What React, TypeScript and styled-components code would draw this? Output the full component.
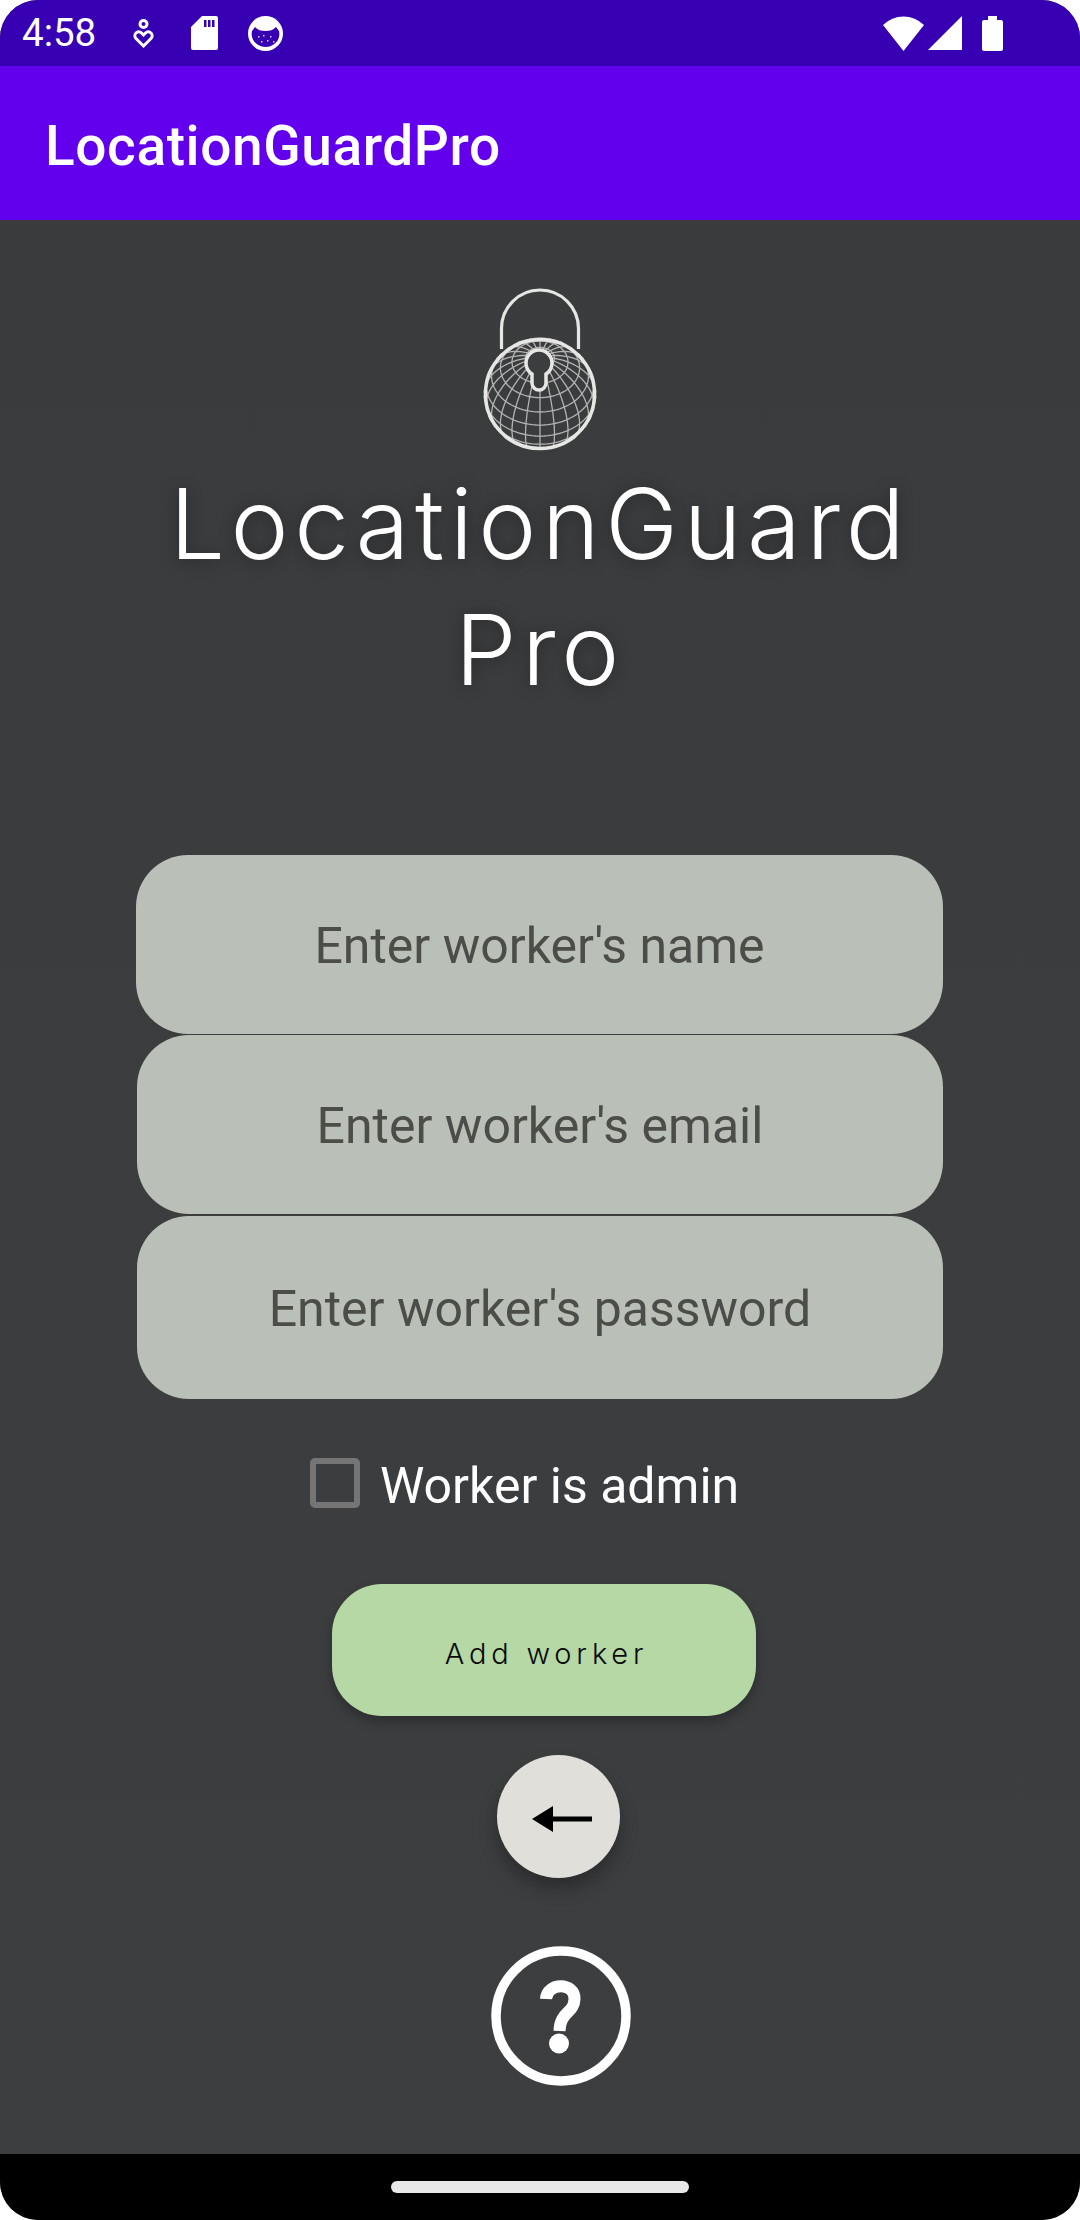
import React from 'react';
import styled, { createGlobalStyle } from 'styled-components';

const Global = createGlobalStyle`
  html, body { margin: 0; padding: 0; background: #fff; }
  #root { width: 1080px; height: 2220px; overflow: hidden; }
`;
const Screen = styled.div`
  width: 1080px; height: 2220px; display: flex; flex-direction: column; border-radius: 38px;
  background: linear-gradient(#3a3b3d, #3d3e40); font-family: Roboto, "Liberation Sans", sans-serif; overflow: hidden;
`;
const StatusBar = styled.div`
  height: 66px; flex: none; background: #3700b3; color: #fff; display: flex; align-items: center;
  padding: 0 77px 0 22px; box-sizing: border-box;
`;
const Time = styled.span` font-size: 38.5px; line-height: 66px; width: 111px; `;
const StatusLeft = styled.div` display: flex; align-items: center; flex: 1; `;
const StatusIcon = styled.svg<{ $gap: number }>` display: block; margin-left: ${p => p.$gap}px; `;
const AppBar = styled.div`
  height: 154px; flex: none; background: #6200ee; color: #fff; display: flex; align-items: center;
  padding: 5px 45px 0; font-size: 55px; font-weight: 500; letter-spacing: .6px; box-sizing: border-box;
`;
const Content = styled.main`
  flex: 1; display: flex; flex-direction: column; align-items: center;
`;
const Logo = styled.svg` margin-top: 68px; display: block; filter: blur(.4px); `;
const Title = styled.h1`
  margin: 10px 0 0; font-family: Inter, sans-serif; font-weight: 350; font-size: 98px; line-height: 126px;
  letter-spacing: 5.6px; color: #fff; text-align: center; text-shadow: 0 2px 16px rgba(0,0,0,.35);
`;
const Fields = styled.div`
  margin-top: 142px; display: flex; flex-direction: column; width: 807px; align-self: flex-start; margin-left: 136px;
`;
const Field = styled.div<{ $h: number; $shift: number; $top: number }>`
  height: ${p => p.$h}px; border-radius: 52px; background: #babfb8; color: #4b4d49; padding-top: 2px; box-sizing: border-box;
  font-size: 50px; display: flex; align-items: center; justify-content: center;
  margin-left: ${p => p.$shift}px; margin-top: ${p => p.$top}px;
`;
const CheckRow = styled.div`
  margin-top: 55px; display: flex; align-items: center; gap: 20px; color: #fff; font-size: 50px;
  align-self: flex-start; margin-left: 310px;
`;
const Box = styled.span`
  width: 50px; height: 50px; border: 6px solid #757575; border-radius: 5px; box-sizing: border-box; display: block;
`;
const CheckLabel = styled.span` padding-top: 3px; margin-bottom: -3px; `;
const AddButton = styled.button`
  margin-top: 72px; margin-left: 8px; width: 424px; height: 132px; border: 0; padding: 6px 0 0 5px; border-radius: 50px; background: #b5d8a5;
  color: #0a0a0a; font-family: Inter, sans-serif; font-weight: 300; font-size: 29px; letter-spacing: 4.8px;
  box-shadow: 0 6px 12px rgba(0,0,0,.28);
`;
const BackButton = styled.button`
  margin-top: 39px; margin-left: 37px; width: 123px; height: 123px; border: 0; border-radius: 50%; background: #e0dfda; padding: 5px 0 0 7px;
  display: flex; align-items: center; justify-content: center; box-shadow: 0 10px 18px rgba(0,0,0,.3);
`;
const HelpIcon = styled.svg` margin-top: 68px; margin-left: 41px; display: block; filter: blur(.4px); `;
const NavBar = styled.div`
  height: 66px; flex: none; background: #000; display: flex; align-items: center; justify-content: center;
`;
const Handle = styled.div` width: 298px; height: 12px; border-radius: 6px; background: #e8e8e8; `;

function globeLines() {
  const cx = 57, cy = 57, R = 56;
  const tilt = 0.85;
  const project = (lat: number, lon: number): [number, number, number] => {
    const x = Math.cos(lat) * Math.sin(lon);
    const y0 = Math.sin(lat);
    const z0 = Math.cos(lat) * Math.cos(lon);
    const y = y0 * Math.cos(tilt) - z0 * Math.sin(tilt);
    const z = y0 * Math.sin(tilt) + z0 * Math.cos(tilt);
    return [cx + R * x, cy - R * y, z];
  };
  const rad = Math.PI / 180;
  const paths: string[] = [];
  const trace = (pts: [number, number, number][]) => {
    let d = '', pen = false;
    for (const [x, y, z] of pts) {
      if (z < 0) { pen = false; continue; }
      d += `${pen ? 'L' : 'M'}${x.toFixed(1)} ${y.toFixed(1)}`;
      pen = true;
    }
    if (d) paths.push(d);
  };
  for (let lat = -75; lat <= 75; lat += 15) {
    const pts: [number, number, number][] = [];
    for (let lon = -180; lon <= 180; lon += 4) pts.push(project(lat * rad, lon * rad));
    trace(pts);
  }
  for (let lon = -180; lon < 180; lon += 15) {
    const pts: [number, number, number][] = [];
    for (let lat = -90; lat <= 90; lat += 4) pts.push(project(lat * rad, lon * rad));
    trace(pts);
  }
  return paths.join('');
}

const LogoMark = () => (
  <Logo width="115" height="163" viewBox="0 -49 115 163" fill="none" stroke="#e6e6e4">
    <path d="M18.500 12V-8.500a38.500 38.500 0 0 1 77 0V12" strokeWidth="3.200" />
    <path d={globeLines()} strokeWidth="1.300" opacity=".7" />
    <circle cx="57" cy="57" r="54.500" strokeWidth="3.500" />
    <path d="M49 37A13 13 0 1 1 63 37V46A7 7 0 0 1 49 46Z" fill="#3c3d3f" strokeWidth="3.500" />
  </Logo>
);

export default function App() {
  return (
    <Screen>
      <Global />
      <StatusBar>
        <StatusLeft>
          <Time>4:58</Time>
          <StatusIcon $gap={0} width="21" height="29" viewBox="0 0 21 29" fill="none" stroke="#fff" strokeWidth="3">
            <circle cx="10.500" cy="5" r="3.500" />
            <path d="M10.500 27 3 19.500a3.800 3.800 0 0 1 5.500-5.500l2 2 2-2a3.800 3.800 0 0 1 5.500 5.500z" />
          </StatusIcon>
          <StatusIcon $gap={37} width="27" height="34" viewBox="0 0 27 34" fill="#fff">
            <path d="M11 0h14a2 2 0 0 1 2 2v30a2 2 0 0 1-2 2H2a2 2 0 0 1-2-2V11z" />
            <path d="M13 4h2.500v7H13zM17 4h2.500v7H17zM21 4h2.500v7H21z" fill="#3700b3" />
          </StatusIcon>
          <StatusIcon $gap={30} width="35" height="35" viewBox="0 0 35 35">
            <circle cx="17.500" cy="17.500" r="17.500" fill="#fff" />
            <path d="M4 15 7 11c3 3 6 4 10.500 4S25 14 28 11l3 4c2 9-5 16-13.500 16S2 24 4 15z" fill="#3700b3" />
            <path d="M10 20h1.500v1.500H10zM15 19h1.500v1.500H15zM22 20h1.500v1.500H22zM13 25h1.500v1.500H13zM19 24h1.500v1.500H19zM25 25h1.500v1.500H25z" fill="#d8d0f0" />
          </StatusIcon>
        </StatusLeft>
        <StatusIcon $gap={0} width="41" height="35" viewBox="0 0 41 35" fill="#fff">
          <path d="M0 9A29 29 0 0 1 41 9L20.500 35z" />
        </StatusIcon>
        <StatusIcon $gap={4} width="34" height="34" viewBox="0 0 34 34" fill="#fff">
          <path d="M34 0V34H0z" />
        </StatusIcon>
        <StatusIcon $gap={20} width="21" height="35" viewBox="0 0 21 35" fill="#fff">
          <path d="M6 0h9v4h4a2 2 0 0 1 2 2v27a2 2 0 0 1-2 2H2a2 2 0 0 1-2-2V6a2 2 0 0 1 2-2h4z" />
        </StatusIcon>
      </StatusBar>
      <AppBar>LocationGuardPro</AppBar>
      <Content>
        <LogoMark />
        <Title>LocationGuard<br />Pro</Title>
        <Fields>
          <Field $h={179} $shift={0} $top={0}>Enter worker's name</Field>
          <Field $h={179} $shift={1} $top={1}>Enter worker's email</Field>
          <Field $h={183} $shift={1} $top={2}>Enter worker's password</Field>
        </Fields>
        <CheckRow><Box /><CheckLabel>Worker is admin</CheckLabel></CheckRow>
        <AddButton>Add worker</AddButton>
        <BackButton aria-label="Back">
          <svg width="60" height="26" viewBox="0 0 60 26">
            <path d="M0 13 21 0v10.500h39v5H21V26z" fill="#000" />
          </svg>
        </BackButton>
        <HelpIcon width="140" height="140" viewBox="0 0 140 140" fill="none" stroke="#fff">
          <circle cx="70" cy="70" r="65" strokeWidth="9.500" />
          <path d="M55 53C56 36 84 36 83.500 53C83 68 69 65 68.500 85" strokeWidth="12" />
          <circle cx="68" cy="97.500" r="10" fill="#fff" stroke="none" />
        </HelpIcon>
      </Content>
      <NavBar><Handle /></NavBar>
    </Screen>
  );
}
